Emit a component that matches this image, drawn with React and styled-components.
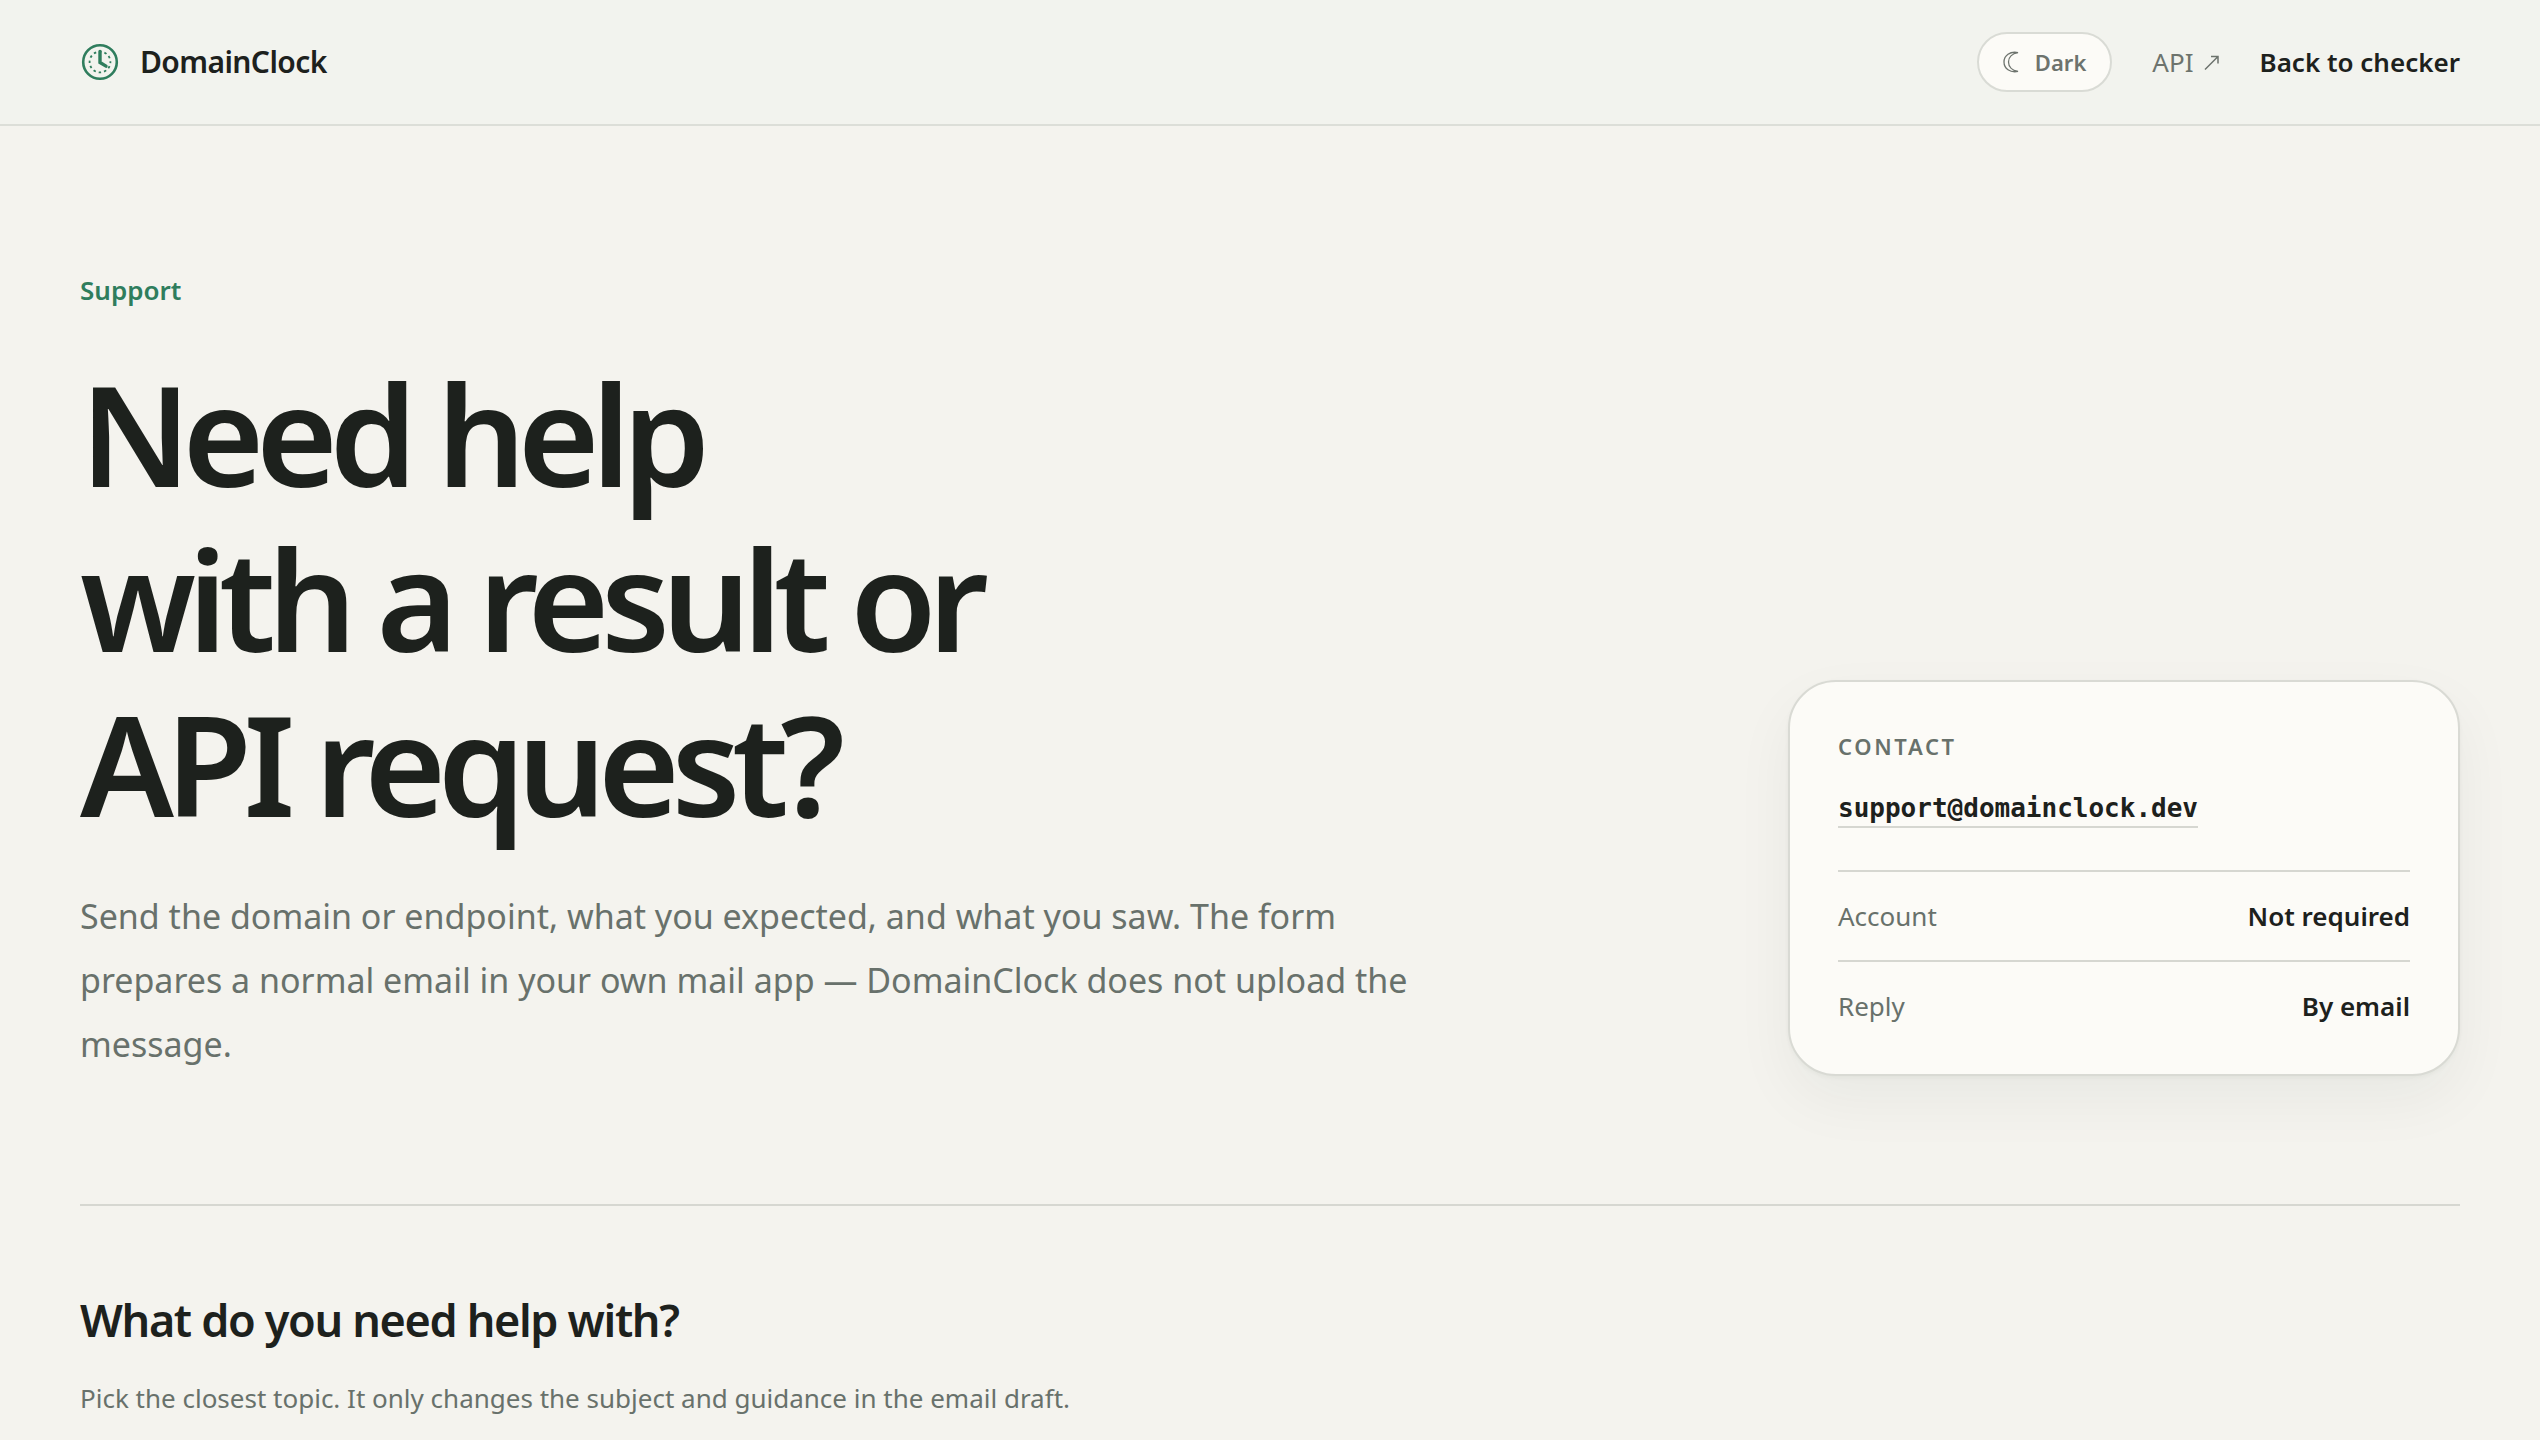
import React, { useState } from "react";
import styled, { createGlobalStyle } from "styled-components";

const GlobalStyle = createGlobalStyle`
  * {
    box-sizing: border-box;
  }

  body {
    margin: 0;
    background: #f4f3ee;
    color: #1d211d;
    font-family: "Noto Sans", sans-serif;
    font-size: 26px;
    line-height: 40px;
  }
`;

const Header = styled.header`
  display: flex;
  justify-content: space-between;
  align-items: center;
  height: 126px;
  padding: 0 80px;
  background: #f2f3ee;
  border-bottom: 2px solid #dcded8;
`;

const Brand = styled.a`
  display: flex;
  align-items: center;
  gap: 20px;
  color: inherit;
  font-size: 30px;
  font-weight: 600;
  letter-spacing: -0.02em;
  text-decoration: none;
`;

const Nav = styled.nav`
  display: flex;
  align-items: center;
  gap: 40px;
`;

const NavLink = styled.a`
  display: flex;
  gap: 10px;
  color: ${(props) => (props.$strong ? "#1d211d" : "#6d736d")};
  font-weight: ${(props) => (props.$strong ? 600 : 400)};
  text-decoration: none;
`;

const ThemeButton = styled.button`
  display: flex;
  align-items: center;
  gap: 16px;
  height: 60px;
  padding: 0 24px;
  background: #fcfbf7;
  border: 2px solid #d9dbd5;
  border-radius: 30px;
  color: #6d736d;
  font: 600 22px "Noto Sans", sans-serif;
  cursor: pointer;
`;

const Main = styled.main`
  padding: 0 80px;
`;

const Hero = styled.section`
  display: flex;
  justify-content: space-between;
  align-items: flex-end;
  gap: 80px;
  padding: 144px 0 128px;
  border-bottom: 2px solid #d6d7d1;
`;

const Intro = styled.div`
  max-width: 1360px;
`;

const Eyebrow = styled.p`
  margin: 0 0 40px;
  color: #2f7d5d;
  font-weight: 600;
`;

const Title = styled.h1`
  margin: 0;
  color: #1d211d;
  font-size: 140px;
  font-weight: 600;
  line-height: 165px;
  letter-spacing: -0.06em;
`;

const Lead = styled.p`
  margin: 39px 0 0;
  color: #68716b;
  font-size: 34px;
  line-height: 64px;
`;

const Card = styled.aside`
  flex: 0 0 672px;
  padding: 44px 48px 24px;
  background: #fcfbf7;
  border: 2px solid #d9dad4;
  border-radius: 48px;
  box-shadow: 0 2px 4px rgba(29, 45, 36, 0.04),
    0 24px 60px rgba(29, 45, 36, 0.05);
`;

const CardLabel = styled.p`
  margin: 0;
  color: #68716b;
  font-size: 22px;
  font-weight: 600;
  letter-spacing: 0.12em;
`;

const Email = styled.a`
  display: inline-block;
  margin: 24px 0 42px;
  border-bottom: 2px solid #d6d7d1;
  color: #1d211d;
  font-family: "DejaVu Sans Mono", monospace;
  font-weight: 700;
  line-height: 36px;
  text-decoration: none;
`;

const Facts = styled.dl`
  margin: 0;
`;

const Fact = styled.div`
  display: flex;
  justify-content: space-between;
  padding: 24px 0;
  border-top: 2px solid #d6d7d1;
`;

const Term = styled.dt`
  color: #68716b;
`;

const Value = styled.dd`
  margin: 0;
  font-weight: 600;
`;

const Topics = styled.section`
  padding: 78px 0;
`;

const Subtitle = styled.h2`
  margin: 0 0 22px;
  font-size: 45px;
  font-weight: 600;
  line-height: 72px;
  letter-spacing: -0.03em;
`;

const Hint = styled.p`
  margin: 0;
  color: #68716b;
`;

const facts = [
  { term: "Account", value: "Not required" },
  { term: "Reply", value: "By email" },
];

const ClockLogo = () => (
  <svg width="40" height="40" viewBox="0 0 40 40" fill="none" stroke="#2f7d5d">
    <circle cx="20" cy="20" r="16.8" strokeWidth="2.6" />
    <circle
      cx="20"
      cy="20"
      r="10.4"
      strokeWidth="1.8"
      strokeDasharray="2.5 2.945"
      strokeDashoffset="1.25"
    />
    <path d="M20 9.5V20.5l6 3.6" strokeWidth="3.4" strokeLinecap="round" />
  </svg>
);

const ArrowIcon = () => (
  <svg width="16" height="40" viewBox="0 0 16 40" fill="none" stroke="#6d736d">
    <path d="M1 27.5L14 14.5M7 14.5h7v7" strokeWidth="1.5" />
  </svg>
);

const MoonIcon = () => (
  <svg width="16" height="22" viewBox="0 0 16 22" fill="none" stroke="#6d736d">
    <path
      d="M15 1.6C7 0 1 4.500 1 11s6 11 14 9.400C9.500 19.500 5.500 16 5.500 11S9.500 2.500 15 1.600z"
      strokeWidth="1.3"
    />
  </svg>
);

const App = () => {
  const [dark, setDark] = useState(false);

  return (
    <>
      <GlobalStyle />
      <Header>
        <Brand href="#">
          <ClockLogo />
          DomainClock
        </Brand>
        <Nav>
          <ThemeButton
            type="button"
            aria-pressed={dark}
            onClick={() => setDark(!dark)}
          >
            <MoonIcon />
            Dark
          </ThemeButton>
          <NavLink href="#api">
            API <ArrowIcon />
          </NavLink>
          <NavLink href="#checker" $strong>
            Back to checker
          </NavLink>
        </Nav>
      </Header>
      <Main>
        <Hero>
          <Intro>
            <Eyebrow>Support</Eyebrow>
            <Title>
              Need help
              <br />
              with a result or
              <br />
              API request?
            </Title>
            <Lead>
              Send the domain or endpoint, what you expected, and what you saw.
              The form prepares a normal email in your own mail app —
              DomainClock does not upload the message.
            </Lead>
          </Intro>
          <Card>
            <CardLabel>CONTACT</CardLabel>
            <Email href="mailto:support@domainclock.dev">
              support@domainclock.dev
            </Email>
            <Facts>
              {facts.map((fact) => (
                <Fact key={fact.term}>
                  <Term>{fact.term}</Term>
                  <Value>{fact.value}</Value>
                </Fact>
              ))}
            </Facts>
          </Card>
        </Hero>
        <Topics>
          <Subtitle>What do you need help with?</Subtitle>
          <Hint>
            Pick the closest topic. It only changes the subject and guidance in
            the email draft.
          </Hint>
        </Topics>
      </Main>
    </>
  );
};

export default App;
